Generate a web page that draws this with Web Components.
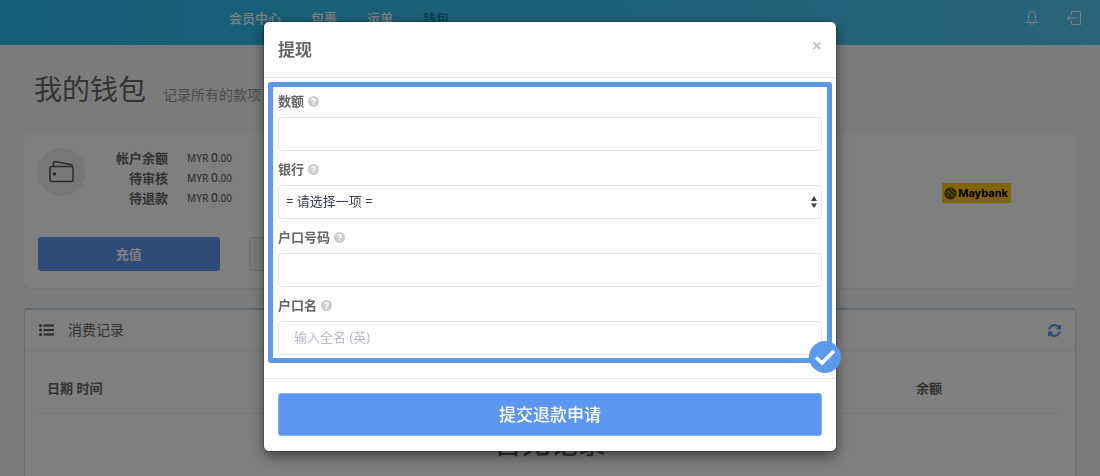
<!DOCTYPE html>
<html lang="zh-CN">
<head>
<meta charset="utf-8">
<meta name="viewport" content="width=device-width, initial-scale=1">
<title>我的钱包</title>
<style>
    body {
        margin: 0;
        overflow: hidden;
        background: #f5f7fb;
        color: #666;
        font: 13px/20px "Noto Sans", "Noto Sans CJK SC", sans-serif;
    }
</style>
</head>
<body>
<wallet-page>
    <top-bar slot="header"></top-bar>
    <balance-card>
        <balance-row label="帐户余额" amount="0"></balance-row>
        <balance-row label="待审核" amount="0"></balance-row>
        <balance-row label="待退款" amount="0"></balance-row>
    </balance-card>
    <record-panel heading="消费记录"></record-panel>
</wallet-page>

<modal-dialog heading="提现">
    <form-field label="数额"></form-field>
    <form-field label="银行" type="select">
        <option>= 请选择一项 =</option>
        <option>Maybank</option>
    </form-field>
    <form-field label="户口号码"></form-field>
    <form-field label="户口名" placeholder="输入全名 (英)"></form-field>
    <span slot="submit">提交退款申请</span>
</modal-dialog>

<script>
class TopBar extends HTMLElement {
    constructor() {
        super();
        this.attachShadow({ mode: 'open' });
    }

    connectedCallback() {
        this.shadowRoot.innerHTML = `
            <style>
                :host {
                    display: flex;
                    box-sizing: border-box;
                    min-height: 45px;
                    padding: 8px 19px 17px 229px;
                    background: linear-gradient(90deg, #24bcea, #54caf4);
                    font-weight: 500;
                }
                nav {
                    display: flex;
                    gap: 30px;
                }
                .tools {
                    display: flex;
                    gap: 28px;
                    margin-left: auto;
                }
                a {
                    color: #fff;
                    text-decoration: none;
                }
                a.active {
                    color: #0c7898;
                }
                button {
                    display: flex;
                    align-items: center;
                    padding: 0;
                    border: 0;
                    background: none;
                }
                svg {
                    width: 14px;
                    height: 14px;
                    fill: none;
                    stroke: #fff;
                }
            </style>
            <nav>
                <a href="#">会员中心</a>
                <a href="#">包裹</a>
                <a href="#">运单</a>
                <a href="#" class="active">钱包</a>
            </nav>
            <div class="tools">
                <button type="button" aria-label="通知">
                    <svg viewBox="0 0 14 14"><path d="M1 11.500h12M2 11.500c1-1 1.500-2 1.500-4V4.500c0-2.500 1-4 3.500-4s3.500 1.500 3.500 4v3c0 2 .5 3 1.500 4M5.500 12c0 2 3 2 3 0"/></svg>
                </button>
                <button type="button" aria-label="登出">
                    <svg viewBox="0 0 14 14"><path d="M4.500 4V.5h9v13h-9V10M9.500 7H.5M3 4.500L.5 7 3 9.500"/></svg>
                </button>
            </div>
        `;
    }
}

class WalletPage extends HTMLElement {
    constructor() {
        super();
        this.attachShadow({ mode: 'open' });
    }

    connectedCallback() {
        this.shadowRoot.innerHTML = `
            <style>
                :host {
                    display: block;
                    height: 100vh;
                    overflow: hidden;
                }
                main {
                    display: flex;
                    flex-direction: column;
                    gap: 20px;
                    padding: 0 24px;
                }
                .title {
                    display: flex;
                    align-items: baseline;
                    gap: 17px;
                    padding: 24px 10px 5px;
                }
                h1 {
                    margin: 0;
                    font-size: 28px;
                    font-weight: 400;
                    line-height: 40px;
                }
                .title span {
                    font-size: 14px;
                    color: #999;
                }
            </style>
            <slot name="header"></slot>
            <main>
                <div class="title">
                    <h1>我的钱包</h1>
                    <span>记录所有的款项</span>
                </div>
                <slot></slot>
            </main>
        `;
    }
}

class BalanceRow extends HTMLElement {
    constructor() {
        super();
        this.attachShadow({ mode: 'open' });
    }

    connectedCallback() {
        this.shadowRoot.innerHTML = `
            <style>
                :host {
                    display: grid;
                    grid-template-columns: 82px auto;
                    gap: 19px;
                }
                b {
                    text-align: right;
                    font-weight: 700;
                }
                span {
                    font-size: 10px;
                    font-weight: 500;
                }
                big {
                    font-size: 12px;
                }
            </style>
            <b>${this.getAttribute('label')}</b>
            <span>MYR <big>${this.getAttribute('amount')}</big>.00</span>
        `;
    }
}

class BalanceCard extends HTMLElement {
    constructor() {
        super();
        this.attachShadow({ mode: 'open' });
    }

    connectedCallback() {
        this.shadowRoot.innerHTML = `
            <style>
                :host {
                    display: flex;
                    align-items: center;
                    justify-content: space-between;
                    padding: 14px 0 17px;
                    border-radius: 5px;
                    background: #fff;
                    box-shadow: 0 1px 1px rgba(0, 0, 0, .06);
                }
                .account {
                    flex: 0 0 39%;
                    box-sizing: border-box;
                    padding: 0 4px 0 14px;
                }
                .summary {
                    display: flex;
                    align-items: flex-start;
                }
                .badge {
                    display: flex;
                    align-items: center;
                    justify-content: center;
                    width: 48px;
                    height: 48px;
                    border-radius: 50%;
                    background: #eee;
                }
                .badge svg {
                    width: 26px;
                    height: 24px;
                    fill: none;
                    stroke: #555;
                    stroke-width: 1.5;
                    stroke-linejoin: round;
                }
                .actions {
                    display: grid;
                    grid-template-columns: 1fr 1fr;
                    gap: 29px;
                    margin-top: 29px;
                }
                button {
                    height: 34px;
                    border: 1px solid #ddd;
                    border-radius: 3px;
                    background: #f7f7f7;
                    color: #666;
                    font: inherit;
                    font-weight: 700;
                }
                button.primary {
                    border-color: #5b97f0;
                    background: #5b97f0;
                    color: #fff;
                }
                .bank {
                    display: flex;
                    flex: 0 0 19%;
                    align-self: flex-start;
                    justify-content: center;
                    padding-top: 35px;
                }
                .logo {
                    display: flex;
                    align-items: center;
                    justify-content: center;
                    gap: 1px;
                    width: 69px;
                    height: 20px;
                    background: #ffc800;
                    color: #000;
                    font: 700 11px/20px Inter, sans-serif;
                }
                .logo svg {
                    width: 13px;
                    height: 13px;
                }
            </style>
            <div class="account">
                <div class="summary">
                    <div class="badge">
                        <svg viewBox="0 0 26 24"><path d="M3 6.500h19.500a1.500 1.500 0 0 1 1.500 1.500v12a1.500 1.500 0 0 1-1.500 1.500h-20A1.500 1.500 0 0 1 1 20V8a1.500 1.500 0 0 1 1.500-1.500H3zM4.500 6.500V3.500q0-2 2-1.700L22 4.500q1.500.3 1.500 2.500"/><circle cx="5.500" cy="14" r="1" fill="#555"/></svg>
                    </div>
                    <div><slot></slot></div>
                </div>
                <div class="actions">
                    <button type="button" class="primary">充值</button>
                    <button type="button">提现</button>
                </div>
            </div>
            <div class="bank">
                <div class="logo">
                    <svg viewBox="0 0 13 13"><circle cx="6.500" cy="6.500" r="5.500" fill="#a8860a" stroke="#30290a"/><path d="M2 4q2-2 4-1M2 7q2-2 3 0t2 1M3 9.500q3 2 6 0M7.500 4l2-1.500 1 2.500M6 3.500l1 2 3 1M9 8l2-1" fill="none" stroke="#30290a"/></svg>
                    Maybank
                </div>
            </div>
        `;
    }
}

class RecordPanel extends HTMLElement {
    constructor() {
        super();
        this.attachShadow({ mode: 'open' });
    }

    connectedCallback() {
        this.shadowRoot.innerHTML = `
            <style>
                :host {
                    display: block;
                    border: 1px solid #d5dee5;
                    border-top: 2px solid #c2d2dd;
                    border-radius: 4px;
                    background: #fff;
                }
                header {
                    display: flex;
                    align-items: center;
                    gap: 14px;
                    padding: 10px 14px;
                    border-bottom: 1px solid #eee;
                }
                h2 {
                    margin: 0;
                    font-size: 14px;
                    font-weight: 400;
                }
                header svg {
                    display: block;
                    width: 15px;
                    height: 14px;
                }
                header button {
                    margin-left: auto;
                    padding: 0;
                    border: 0;
                    background: none;
                    color: #5b97f0;
                }
                header button svg {
                    width: 13px;
                    height: 13px;
                }
                .body {
                    padding: 14px 14px 40px;
                }
                table {
                    width: 100%;
                    border-collapse: collapse;
                }
                th {
                    padding: 13px 8px 15px;
                    border-bottom: 1px solid #eee;
                    text-align: left;
                    font-weight: 700;
                }
                th:last-child {
                    width: 137px;
                }
                td {
                    padding: 9px 0;
                    text-align: center;
                    font-size: 28px;
                    font-weight: 500;
                    line-height: 40px;
                }
            </style>
            <header>
                <svg viewBox="0 0 15 14" fill="#555"><path d="M4.500 1.500H15v2H4.500zM4.500 6H15v2H4.500zM4.500 10.500H15v2H4.500z"/><circle cx="1.500" cy="2.500" r="1.500"/><circle cx="1.500" cy="7" r="1.500"/><circle cx="1.500" cy="11.500" r="1.500"/></svg>
                <h2>${this.getAttribute('heading')}</h2>
                <button type="button" aria-label="刷新">
                    <svg viewBox="0 0 1536 1536" fill="currentColor"><path d="M1511 928q0 5-1 7-64 268-268 434.500t-478 166.500q-146 0-282.500-55t-243.500-157l-129 129q-19 19-45 19t-45-19-19-45v-448q0-26 19-45t45-19h448q26 0 45 19t19 45-19 45l-137 137q71 66 161 102t187 36q134 0 250-65t186-179q11-17 53-117 8-23 30-23h192q13 0 22.500 9.500t9.500 22.500zm25-800v448q0 26-19 45t-45 19h-448q-26 0-45-19t-19-45 19-45l138-138q-148-137-349-137-134 0-250 65t-186 179q-11 17-53 117-8 23-30 23h-199q-13 0-22.500-9.500t-9.500-22.500v-7q65-268 270-434.500t480-166.500q146 0 284 55.500t245 156.500l130-129q19-19 45-19t45 19 19 45z"/></svg>
                </button>
            </header>
            <div class="body">
                <table>
                    <thead><tr><th>日期 时间</th><th>余额</th></tr></thead>
                    <tbody><tr><td colspan="2">暂无记录</td></tr></tbody>
                </table>
            </div>
        `;
    }
}

class FormField extends HTMLElement {
    constructor() {
        super();
        this.attachShadow({ mode: 'open' });
    }

    connectedCallback() {
        const label = this.getAttribute('label');
        const placeholder = this.getAttribute('placeholder') || '';
        const isSelect = this.getAttribute('type') === 'select';

        const control = isSelect
            ? `<select id="control"></select>
               <svg class="arrows" viewBox="0 0 6 12"><path d="M0 5l3-5 3 5zM0 7.500h6l-3 4.500z"/></svg>`
            : `<input id="control" type="text" placeholder="${placeholder}">`;

        this.shadowRoot.innerHTML = `
            <style>
                :host {
                    display: block;
                }
                label {
                    display: flex;
                    align-items: center;
                    gap: 4px;
                    margin-bottom: 7px;
                    font-weight: 700;
                    line-height: 18px;
                }
                label svg {
                    width: 11px;
                    height: 11px;
                }
                .control {
                    position: relative;
                }
                input, select {
                    display: block;
                    box-sizing: border-box;
                    width: 100%;
                    height: 34px;
                    padding: 0 15px 2px;
                    border: 1px solid #dde6e9;
                    border-radius: 4px;
                    background: #fff;
                    color: #3a3f51;
                    font: inherit;
                    appearance: none;
                }
                select {
                    padding: 0 7px 2px;
                }
                input::placeholder {
                    color: #b7bacb;
                }
                .arrows {
                    position: absolute;
                    top: 11px;
                    right: 5px;
                    width: 6px;
                    height: 12px;
                    fill: #3a3f51;
                    pointer-events: none;
                }
            </style>
            <label for="control">${label}
                <svg viewBox="0 0 12 12"><circle cx="6" cy="6" r="6" fill="#ccc"/><path d="M4 4.600q.2-1.600 2-1.600t2 1.400q0 .8-1 1.300-1 .5-1 1.300M6 8v1.600" fill="none" stroke="#fff" stroke-width="1.600"/></svg>
            </label>
            <div class="control">${control}</div>
        `;

        if (isSelect) {
            const select = this.shadowRoot.querySelector('select');
            this.querySelectorAll('option').forEach(option => {
                select.appendChild(option.cloneNode(true));
            });
        }
    }
}

class ModalDialog extends HTMLElement {
    constructor() {
        super();
        this.attachShadow({ mode: 'open' });
    }

    connectedCallback() {
        this.render();
        this.shadowRoot.querySelector('.close').addEventListener('click', () => {
            this.remove();
        });
    }

    render() {
        this.shadowRoot.innerHTML = `
            <style>
                :host {
                    position: fixed;
                    inset: 0;
                    padding: 22px 16px;
                    background: rgba(0, 0, 0, .5);
                }
                .dialog {
                    max-width: 572px;
                    margin: 0 auto;
                    border-radius: 5px;
                    background: #fff;
                    box-shadow: 0 5px 14px rgba(0, 0, 0, .5), 0 0 1px 1px rgba(0, 0, 0, .2);
                }
                header {
                    display: flex;
                    align-items: flex-start;
                    justify-content: space-between;
                    padding: 14px;
                    border-bottom: 1px solid #e5e9eb;
                }
                h2 {
                    margin: 0;
                    font-size: 17px;
                    font-weight: 700;
                    line-height: 27px;
                }
                .close {
                    padding: 0;
                    border: 0;
                    background: none;
                    color: #c4c4c4;
                    font: 700 18px/18px "Noto Sans", sans-serif;
                }
                .fields {
                    position: relative;
                    display: flex;
                    flex-direction: column;
                    gap: 9px;
                    margin: 4px 4px 15px;
                    padding: 5px 5px 3px;
                    border: 5px solid #5b9aea;
                    border-radius: 3px;
                }
                .check {
                    position: absolute;
                    right: -14px;
                    bottom: -15px;
                    width: 32px;
                    height: 32px;
                }
                footer {
                    padding: 14px 14px 15px;
                    border-top: 1px solid #e5e5e5;
                }
                .submit {
                    display: block;
                    width: 100%;
                    height: 43px;
                    border: 1px solid #85b2f4;
                    border-radius: 3px;
                    background: #5b97f0;
                    color: #fff;
                    font: inherit;
                    font-size: 17px;
                    font-weight: 500;
                }
            </style>
            <div class="dialog" role="dialog" aria-labelledby="heading">
                <header>
                    <h2 id="heading">${this.getAttribute('heading')}</h2>
                    <button type="button" class="close" aria-label="关闭">×</button>
                </header>
                <div class="fields">
                    <slot></slot>
                    <svg class="check" viewBox="0 0 32 32"><circle cx="16" cy="16" r="16" fill="#5b9aea"/><path d="M7 16.500l6 5.500L25 10" fill="none" stroke="#fff" stroke-width="3.500"/></svg>
                </div>
                <footer>
                    <button type="submit" class="submit"><slot name="submit"></slot></button>
                </footer>
            </div>
        `;
    }
}

customElements.define('top-bar', TopBar);
customElements.define('wallet-page', WalletPage);
customElements.define('balance-row', BalanceRow);
customElements.define('balance-card', BalanceCard);
customElements.define('record-panel', RecordPanel);
customElements.define('form-field', FormField);
customElements.define('modal-dialog', ModalDialog);
</script>
</body>
</html>
